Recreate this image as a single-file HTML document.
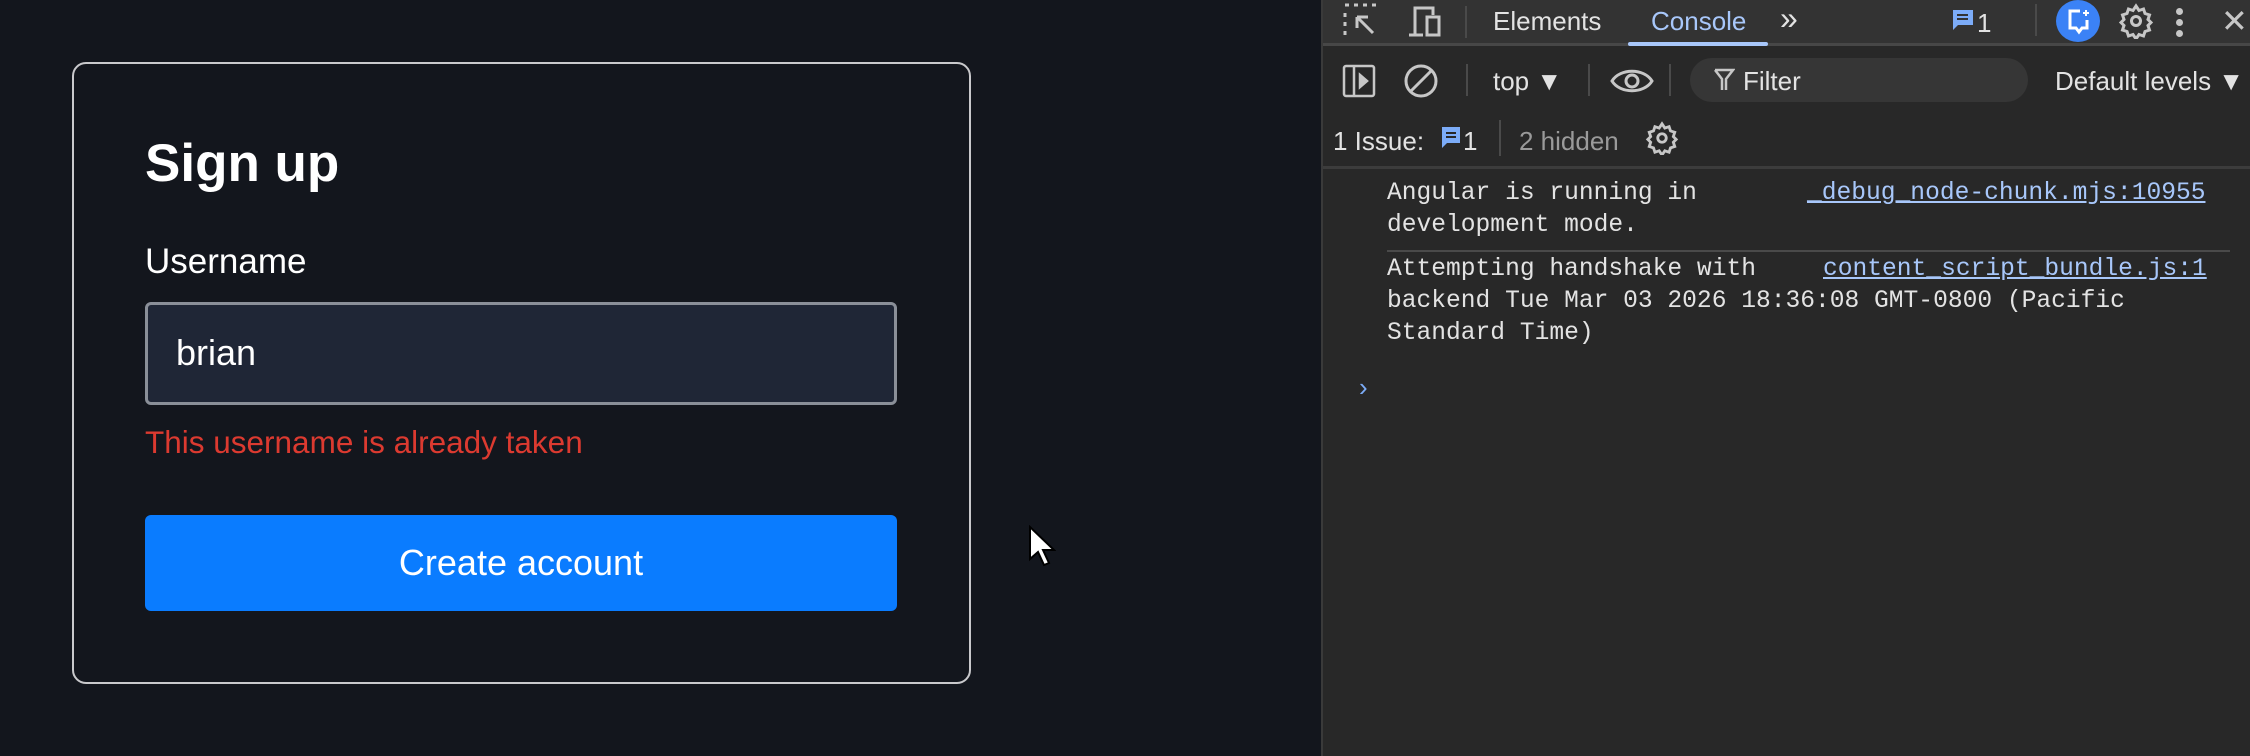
<!DOCTYPE html>
<html><head><meta charset="utf-8"><style>
*{margin:0;padding:0;box-sizing:border-box}
body{width:2250px;height:756px;background:#13161d;position:relative;overflow:hidden;font-family:"Liberation Sans",sans-serif}
.a{position:absolute}
.card{left:72px;top:62px;width:899px;height:622px;border:2px solid #c9c9cc;border-radius:14px}
.dt{left:1321px;top:0;width:929px;height:756px;background:#282828;border-left:2px solid #3a3a3a}
.mono{font-family:"Liberation Mono",monospace;font-size:24.6px;color:#e3e3e3;line-height:32px;white-space:pre}
.lnk{color:#a8c7fa;text-decoration:underline}
.t{color:#e3e3e3;font-size:26px}
</style></head><body>
<div class="a card"></div>
<div class="a" style="left:145px;top:133px;font-size:53px;font-weight:bold;color:#fff">Sign up</div>
<div class="a" style="left:145px;top:242px;font-size:35px;color:#fff">Username</div>
<div class="a" style="left:145px;top:302px;width:752px;height:103px;background:#1f2636;border:3px solid #8a8f98;border-radius:6px"></div>
<div class="a" style="left:176px;top:332px;font-size:36px;color:#fff">brian</div>
<div class="a" style="left:145px;top:424px;font-size:31.5px;color:#dc3a30">This username is already taken</div>
<div class="a" style="left:145px;top:515px;width:752px;height:96px;background:#0a7cff;border-radius:6px;color:#fff;font-size:36px;text-align:center;line-height:96px">Create account</div>
<svg class="a" style="left:1028px;top:525px" width="28" height="42" viewBox="0 0 28 42"><path d="M2 2 L2 34 L10 27 L16 40 L21 38 L15 25 L26 25 Z" fill="#fff" stroke="#000" stroke-width="2"/></svg>

<div class="a dt">
 <div class="a" style="left:0;top:0;width:929px;height:46px;background:#333333;border-bottom:3px solid #474747"></div>
 <svg class="a" style="left:20px;top:3px" width="40" height="36" viewBox="0 0 40 36" fill="none" stroke="#c7c7c7" stroke-width="3"><path d="M2 2h4M11 2h4M20 2h4M29 2h4M2 10v4M2 19v4M2 28v4M14 14l16 16M14 14h11M14 14v11"/></svg>
 <svg class="a" style="left:84px;top:5px" width="38" height="34" viewBox="0 0 38 34" fill="none" stroke="#c7c7c7" stroke-width="3"><path d="M8 30V3h18v7M2 30h14M20 12h12v18H20z"/></svg>
 <div class="a" style="left:142px;top:6px;width:2px;height:32px;background:#4a4a4a"></div>
 <div class="a t" style="left:170px;top:6px">Elements</div>
 <div class="a t" style="left:328px;top:6px;color:#a8c7fa">Console</div>
 <div class="a" style="left:305px;top:42px;width:140px;height:4px;background:#a8c7fa;border-radius:2px"></div>
 <div class="a t" style="left:457px;top:0;font-size:32px">&#187;</div>
 <svg class="a" style="left:628px;top:8px" width="24" height="24" viewBox="0 0 24 24"><path d="M2 2h20v15H7l-5 5z" fill="#7cacf8"/><path d="M6 7h11M6 11h11" stroke="#333" stroke-width="2"/></svg>
 <div class="a t" style="left:654px;top:8px">1</div>
 <div class="a" style="left:712px;top:4px;width:2px;height:32px;background:#4a4a4a"></div>
 <div class="a" style="left:733px;top:0;width:44px;height:42px;border-radius:50%;background:#3b82f6"></div>
 <svg class="a" style="left:743px;top:8px" width="26" height="28" viewBox="0 0 26 28" fill="none" stroke="#fff" stroke-width="3"><path d="M14 3H4v17h6l3 4 3-4h5v-8"/><path d="M20 2v6M17 5h6" stroke-width="2"/></svg>
 <svg class="a" style="left:795px;top:3px" width="36" height="36" viewBox="0 0 24 24" fill="none" stroke="#c7c7c7" stroke-width="2"><circle cx="12" cy="12" r="3"/><path d="M12 2l2 3 3-1 1 3 3 1-1 3 2 2-2 2 1 3-3 1-1 3-3-1-2 3-2-3-3 1-1-3-3-1 1-3-2-2 2-2-1-3 3-1 1-3 3 1z"/></svg>
 <div class="a" style="left:853px;top:8px;width:7px;height:7px;border-radius:50%;background:#c7c7c7;box-shadow:0 11px 0 #c7c7c7,0 22px 0 #c7c7c7"></div>
 <div class="a t" style="left:898px;top:2px;font-size:32px;color:#c7c7c7">&#x2715;</div>

 <svg class="a" style="left:19px;top:64px" width="36" height="34" viewBox="0 0 36 34" fill="none" stroke="#c7c7c7" stroke-width="2.5"><rect x="2" y="2" width="30" height="30" rx="2"/><path d="M12 2v30"/><path d="M18 11l7 6-7 6z" fill="#c7c7c7"/></svg>
 <svg class="a" style="left:80px;top:63px" width="36" height="36" viewBox="0 0 36 36" fill="none" stroke="#c7c7c7" stroke-width="3"><circle cx="18" cy="18" r="15"/><path d="M8 28L28 8"/></svg>
 <div class="a" style="left:143px;top:64px;width:2px;height:32px;background:#4a4a4a"></div>
 <div class="a t" style="left:170px;top:66px">top &#9660;</div>
 <div class="a" style="left:265px;top:64px;width:2px;height:32px;background:#4a4a4a"></div>
 <svg class="a" style="left:287px;top:66px" width="44" height="30" viewBox="0 0 44 30" fill="none" stroke="#c7c7c7" stroke-width="3"><path d="M2 15C10 2 34 2 42 15C34 28 10 28 2 15z"/><circle cx="22" cy="15" r="6"/></svg>
 <div class="a" style="left:346px;top:64px;width:2px;height:32px;background:#4a4a4a"></div>
 <div class="a" style="left:367px;top:58px;width:338px;height:44px;border-radius:22px;background:#363636"></div>
 <svg class="a" style="left:390px;top:68px" width="22" height="24" viewBox="0 0 22 24" fill="none" stroke="#c7c7c7" stroke-width="2.5"><path d="M2 2h18l-7 9v11M9 22V11L2 2"/></svg>
 <div class="a t" style="left:420px;top:66px">Filter</div>
 <div class="a t" style="left:732px;top:66px">Default levels &#9660;</div>

 <div class="a t" style="left:10px;top:126px">1 Issue:</div>
 <svg class="a" style="left:118px;top:126px" width="20" height="24" viewBox="0 0 20 24"><path d="M1 1h18v16H6l-5 5z" fill="#7cacf8"/><path d="M5 7h10M5 11h10" stroke="#282828" stroke-width="2"/></svg>
 <div class="a t" style="left:140px;top:126px">1</div>
 <div class="a" style="left:176px;top:120px;width:2px;height:36px;background:#4a4a4a"></div>
 <div class="a t" style="left:196px;top:126px;color:#9a9a9a">2 hidden</div>
 <svg class="a" style="left:322px;top:121px" width="34" height="34" viewBox="0 0 24 24" fill="none" stroke="#c7c7c7" stroke-width="2"><circle cx="12" cy="12" r="3"/><path d="M12 2l2 3 3-1 1 3 3 1-1 3 2 2-2 2 1 3-3 1-1 3-3-1-2 3-2-3-3 1-1-3-3-1 1-3-2-2 2-2-1-3 3-1 1-3 3 1z"/></svg>
 <div class="a" style="left:0;top:166px;width:929px;height:3px;background:#3c3c3c"></div>

 <div class="a mono" style="left:64px;top:178px">Angular is running in
development mode.</div>
 <div class="a mono lnk" style="left:484px;top:178px">_debug_node-chunk.mjs:10955</div>
 <div class="a" style="left:64px;top:250px;width:843px;height:2px;background:#4a4a4a"></div>
 <div class="a mono" style="left:64px;top:254px">Attempting handshake with
backend Tue Mar 03 2026 18:36:08 GMT-0800 (Pacific
Standard Time)</div>
 <div class="a mono lnk" style="left:500px;top:254px">content_script_bundle.js:1</div>
 <div class="a" style="left:36px;top:372px;color:#7cacf8;font-size:26px">&#8250;</div>
</div>
</body></html>
